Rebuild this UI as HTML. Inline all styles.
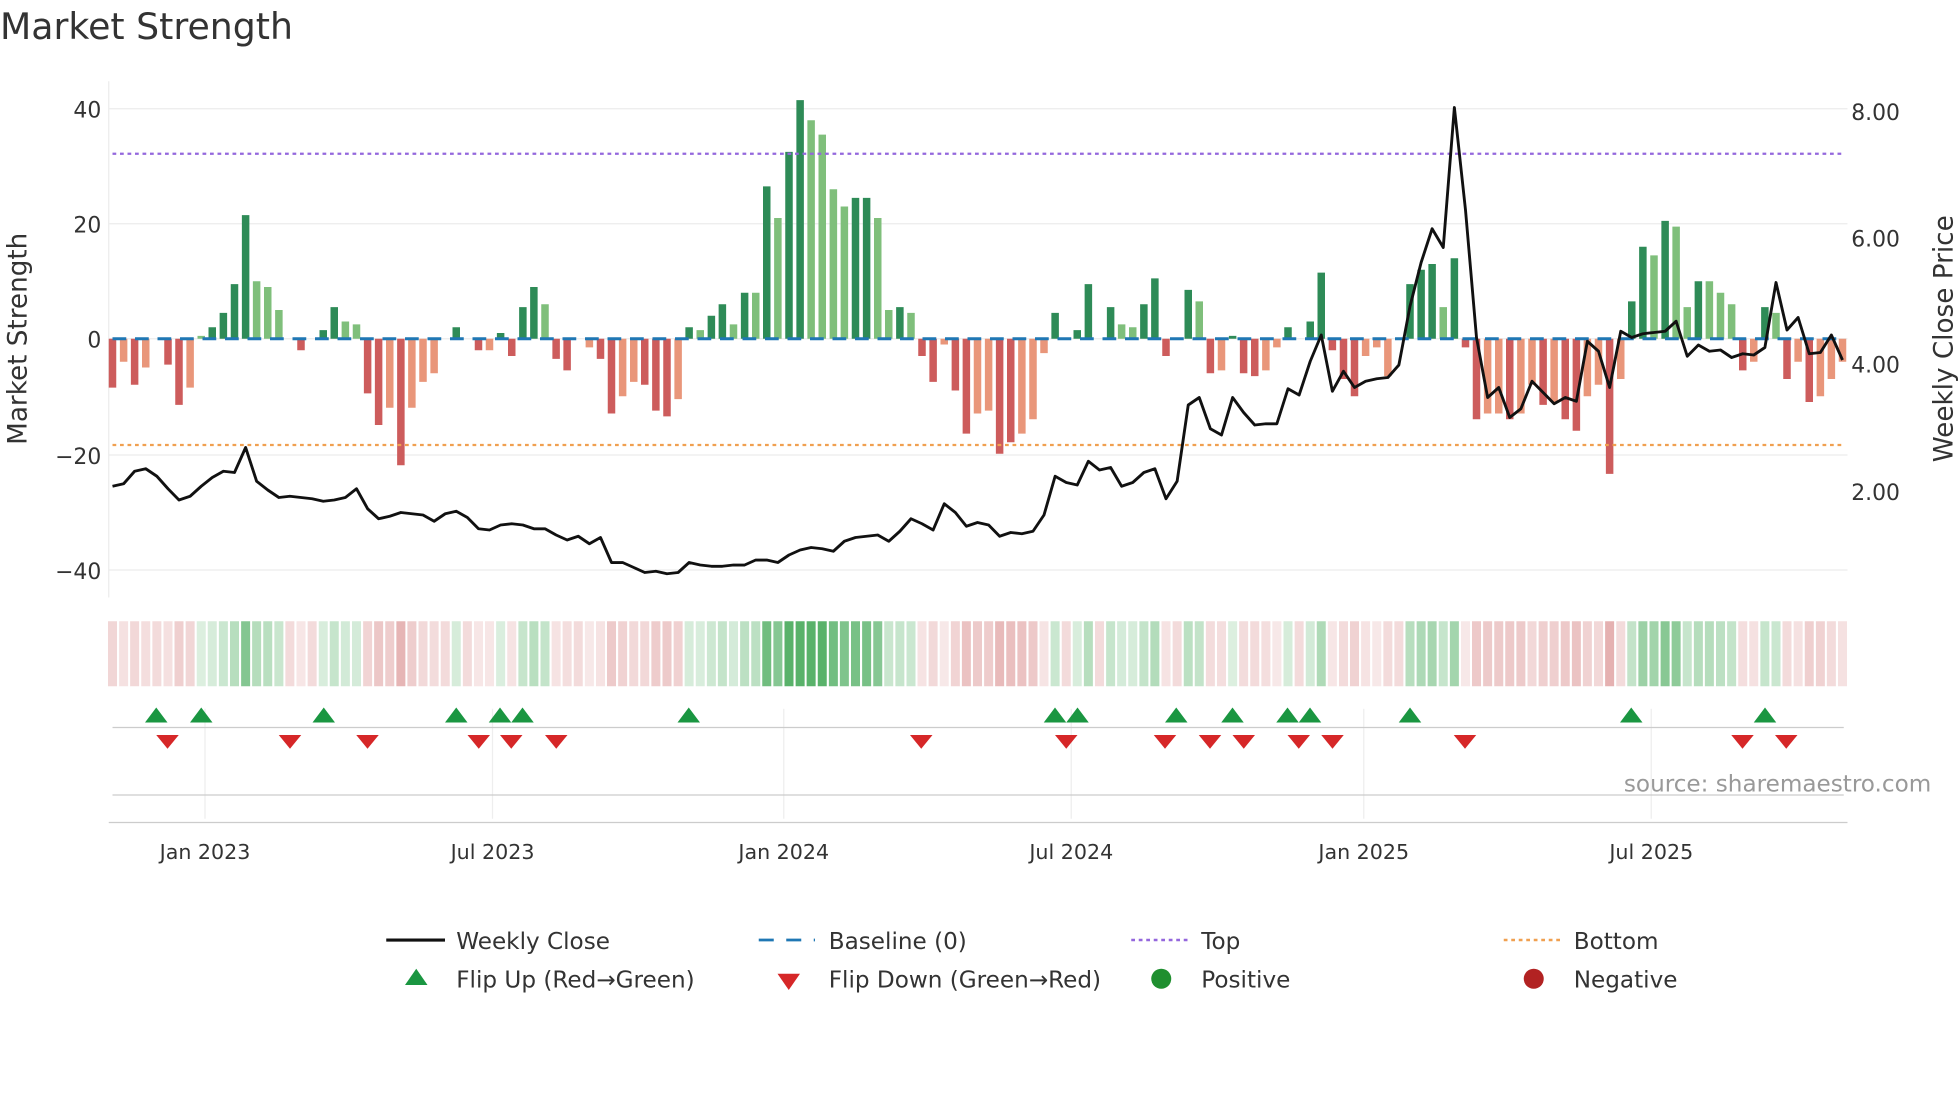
<!DOCTYPE html><html><head><meta charset="utf-8"><style>html,body{margin:0;padding:0;background:#fff;width:1960px;height:1102px;overflow:hidden}svg{display:block}text{font-family:"DejaVu Sans","Liberation Sans",sans-serif;fill:#333}</style></head><body>
<svg id="s" width="1960" height="1102" viewBox="0 0 1568 881.6" preserveAspectRatio="none" xmlns="http://www.w3.org/2000/svg">
<text x="0" y="31" font-size="29">Market Strength</text>
<g stroke="#ececec" stroke-width="1"><line x1="87" x2="1478" y1="87" y2="87"/><line x1="87" x2="1478" y1="179" y2="179"/><line x1="87" x2="1478" y1="271" y2="271"/><line x1="87" x2="1478" y1="364" y2="364"/><line x1="87" x2="1478" y1="456" y2="456"/><line x1="87" x2="87" y1="65" y2="478"/></g>
<g font-size="17.5" text-anchor="end"><text x="81" y="94">40</text><text x="81" y="186">20</text><text x="81" y="278">0</text><text x="81" y="371">−20</text><text x="81" y="463">−40</text></g>
<g font-size="17.5"><text x="1481" y="96">8.00</text><text x="1481" y="197">6.00</text><text x="1481" y="298">4.00</text><text x="1481" y="400">2.00</text></g>
<text transform="translate(21,271) rotate(-90)" font-size="21" text-anchor="middle">Market Strength</text>
<text transform="translate(1562,271) rotate(-90)" font-size="21" text-anchor="middle">Weekly Close Price</text>
<g id="bars"></g>
<line x1="90" x2="1476" y1="271" y2="271" stroke="#1f77b4" stroke-width="2.4" stroke-dasharray="11,7"/>
<line x1="90" x2="1476" y1="123" y2="123" stroke="#9467dd" stroke-width="1.8" stroke-dasharray="3,3"/>
<line x1="90" x2="1476" y1="356" y2="356" stroke="#f0a050" stroke-width="1.8" stroke-dasharray="3,3"/>
<polyline id="pl" fill="none" stroke="#111" stroke-width="2.3" stroke-linejoin="round"/>
<g id="heat"></g>
<g stroke="#eee"><line x1="164" x2="164" y1="567" y2="655"/><line x1="394" x2="394" y1="567" y2="655"/><line x1="627" x2="627" y1="567" y2="655"/><line x1="857" x2="857" y1="567" y2="655"/><line x1="1091" x2="1091" y1="567" y2="655"/><line x1="1321" x2="1321" y1="567" y2="655"/></g>
<line x1="90" x2="1475" y1="582" y2="582" stroke="#ccc"/>
<line x1="90" x2="1475" y1="636" y2="636" stroke="#ccc"/>
<line x1="87" x2="1478" y1="658" y2="658" stroke="#ccc"/>
<g id="tri"></g>
<text x="1545" y="633" font-size="18.5" style="fill:#999" text-anchor="end">source: sharemaestro.com</text>
<g font-size="16.5" text-anchor="middle"><text x="164" y="687">Jan 2023</text><text x="394" y="687">Jul 2023</text><text x="627" y="687">Jan 2024</text><text x="857" y="687">Jul 2024</text><text x="1091" y="687">Jan 2025</text><text x="1321" y="687">Jul 2025</text></g>
<g font-size="18.5">
<line x1="309" x2="356" y1="752" y2="752" stroke="#111" stroke-width="2.5"/><text x="365" y="759">Weekly Close</text>
<line x1="607" x2="652" y1="752" y2="752" stroke="#1f77b4" stroke-width="2.2" stroke-dasharray="12,10"/><text x="663" y="759">Baseline (0)</text>
<line x1="905" x2="950" y1="752" y2="752" stroke="#9467dd" stroke-width="2" stroke-dasharray="3,3"/><text x="961" y="759">Top</text>
<line x1="1203" x2="1248" y1="752" y2="752" stroke="#f0a050" stroke-width="2" stroke-dasharray="3,3"/><text x="1259" y="759">Bottom</text>
<polygon points="324,788 342,788 333,775" fill="#1a9641"/><text x="365" y="790">Flip Up (Red→Green)</text>
<polygon points="622,779 640,779 631,792" fill="#d62728"/><text x="663" y="790">Flip Down (Green→Red)</text>
<circle cx="929" cy="783" r="8" fill="#1f8f2f"/><text x="961" y="790">Positive</text>
<circle cx="1227" cy="783" r="8" fill="#b22222"/><text x="1259" y="790">Negative</text>
</g>
</svg>
<script>
var V=[[-8.5,0],[-4,1],[-8,0],[-5,1],[0,0],[-4.5,0],[-11.5,0],[-8.5,1],[0.5,1],[2,0],[4.5,0],[9.5,0],[21.5,0],[10,1],[9,1],[5,1],[0,0],[-2,0],[0,0],[1.5,0],[5.5,0],[3,1],[2.5,1],[-9.5,0],[-15,0],[-12,1],[-22,0],[-12,1],[-7.5,1],[-6,1],[0,0],[2,0],[0,0],[-2,0],[-2,1],[1,0],[-3,0],[5.5,0],[9,0],[6,1],[-3.5,0],[-5.5,0],[0,0],[-1.5,1],[-3.5,0],[-13,0],[-10,1],[-7.5,1],[-8,0],[-12.5,0],[-13.5,0],[-10.5,1],[2,0],[1.5,1],[4,0],[6,0],[2.5,1],[8,0],[8,1],[26.5,0],[21,1],[32.5,0],[41.5,0],[38,1],[35.5,1],[26,1],[23,1],[24.5,0],[24.5,0],[21,1],[5,1],[5.5,0],[4.5,1],[-3,0],[-7.5,0],[-1,1],[-9,0],[-16.5,0],[-13,1],[-12.5,1],[-20,0],[-18,0],[-16.5,1],[-14,1],[-2.5,1],[4.5,0],[0,0],[1.5,0],[9.5,0],[0,0],[5.5,0],[2.5,1],[2,1],[6,0],[10.5,0],[-3,0],[0,0],[8.5,0],[6.5,1],[-6,0],[-5.5,1],[0.5,0],[-6,0],[-6.5,0],[-5.5,1],[-1.5,1],[2,0],[0,0],[3,0],[11.5,0],[-2,0],[-7,0],[-10,0],[-3,1],[-1.5,1],[-6.5,1],[0,0],[9.5,0],[12,0],[13,0],[5.5,1],[14,0],[-1.5,0],[-14,0],[-13,1],[-13,1],[-14,0],[-13,1],[-8,1],[-11.5,0],[-11,1],[-14,0],[-16,0],[-10,1],[-8,1],[-23.5,0],[-7,1],[6.5,0],[16,0],[14.5,1],[20.5,0],[19.5,1],[5.5,1],[10,0],[10,1],[8,1],[6,1],[-5.5,0],[-4,1],[5.5,0],[4.5,1],[-7,0],[-4,1],[-11,0],[-10,1],[-7,1],[-4,1]];
var P=[389,387,377,375,381,391,400,397,389,382,377,378,358,385,392,398,397,398,399,401,400,398,391,407,415,413,410,411,412,417,411,409,414,423,424,420,419,420,423,423,428,432,429,435,430,450,450,454,458,457,459,458,450,452,453,453,452,452,448,448,450,444,440,438,439,441,433,430,429,428,433,425,415,419,424,403,410,421,418,420,429,426,427,425,412,381,386,388,369,376,374,389,386,378,375,399,385,324,318,343,348,318,330,340,339,339,311,316,289,268,313,297,310,305,303,302,292,245,210,183,198,86,168,270,318,310,334,327,305,314,323,318,321,273,281,310,265,270,267,266,265,257,285,276,281,280,286,283,284,278,226,264,254,283,282,268,288];
var N=V.length,st=90,dx=(1474-90)/(N-1),b='',h='',pts=[];
for(var i=0;i<N;i++){var x=st+i*dx,v=V[i][0],l=V[i][1];
if(v!=0){var c=v>0?(l?'#7fbf7b':'#2e8b57'):(l?'#e9967a':'#cd5c5c');var y=v>0?271-v*4.6:271;b+='<rect x="'+(x-3).toFixed(1)+'" y="'+y.toFixed(1)+'" width="6" height="'+Math.abs(v*4.6).toFixed(1)+'" fill="'+c+'"/>';}
var a=Math.min(1,0.2+Math.abs(v)/40);var hc=v>0?'rgba(60,165,80,'+(a*0.85).toFixed(2)+')':'rgba(200,90,90,'+(a*0.6).toFixed(2)+')';if(v==0)hc='rgba(200,90,90,0.22)';
h+='<rect x="'+(x-3.6).toFixed(1)+'" y="497" width="7.2" height="52" fill="'+hc+'"/>';
pts.push(x.toFixed(1)+','+P[Math.min(i,P.length-1)]);}
document.getElementById('bars').innerHTML=b;document.getElementById('heat').innerHTML=h;document.getElementById('pl').setAttribute('points',pts.join(' '));
var U=[125,161,259,365,400,418,551,844,862,941,986,1030,1048,1128,1305,1412],D=[134,232,294,383,409,445,737,853,932,968,995,1039,1066,1172,1394,1429],t='';
U.forEach(function(x){t+='<polygon points="'+(x-9)+',578 '+(x+9)+',578 '+x+',566" fill="#1a9641"/>';});
D.forEach(function(x){t+='<polygon points="'+(x-9)+',588 '+(x+9)+',588 '+x+',599" fill="#d62728"/>';});
document.getElementById('tri').innerHTML=t;
</script>
</body></html>
